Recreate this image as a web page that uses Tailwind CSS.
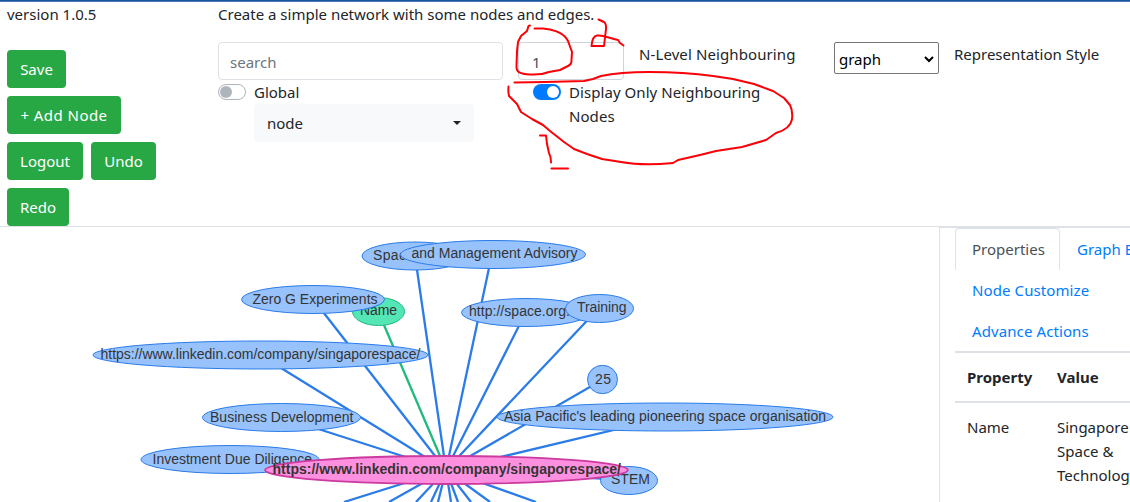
<!DOCTYPE html>
<html lang="en">
<head>
<meta charset="utf-8">
<title>Network editor</title>
<script src="https://cdn.jsdelivr.net/npm/@tailwindcss/browser@4"></script>
</head>
<body class="relative h-[502px] w-[1130px] overflow-hidden bg-white font-['Noto_Sans',sans-serif] text-[15px] leading-6 text-[#212529]">
<div class="h-0.5 border-b border-[#4a7ab5] bg-[#1b55a0]"></div>
<header class="flex h-[225px] border-b border-[#dee2e6]">
  <div class="w-[218px] pl-[7px]">
    <p class="h-12">version 1.0.5</p>
    <div class="flex w-[170px] flex-wrap gap-2 text-white">
      <button class="h-[38px] w-[59px] rounded bg-[#28a745]">Save</button>
      <button class="h-[38px] w-[114px] rounded bg-[#28a745] tracking-[0.45px]">+ Add Node</button>
      <button class="h-[38px] w-[76px] rounded bg-[#28a745]">Logout</button>
      <button class="h-[38px] w-[65px] rounded bg-[#28a745]">Undo</button>
      <button class="h-[38px] w-[62px] rounded bg-[#28a745]">Redo</button>
    </div>
  </div>
  <div class="flex-1">
    <p class="h-10">Create a simple network with some nodes and edges.</p>
    <div class="flex">
      <div class="w-[300px]">
        <div class="flex h-[38px] w-[285px] items-center rounded border border-[#dee2e6] pt-0.5 pl-[11px] text-[#6c757d]">search</div>
        <div class="flex h-6 items-center gap-2"><span class="flex h-4 w-7 items-center rounded-full border border-[#adb5bd] pl-px"><i class="size-3 rounded-full bg-[#adb5bd]"></i></span><span>Global</span></div>
        <div class="ml-9 flex h-[38px] w-[220px] items-center justify-between rounded bg-[#f8f9fa] px-[13px]"><span>node</span><i class="border-x-4 border-t-4 border-x-transparent border-t-[#212529]"></i></div>
      </div>
      <div class="w-[316px]">
        <div class="flex"><div class="flex h-[38px] w-[106px] items-center rounded border border-[#ced4da] pt-0.5 pl-[13px] text-[#495057]">1</div><span class="ml-[15px] tracking-[0.1px]">N-Level Neighbouring</span></div>
        <div class="flex gap-2 pl-[15px]"><span class="mt-1 flex h-4 w-7 items-center justify-end rounded-full bg-[#007bff] pr-0.5"><i class="size-3 rounded-full bg-white"></i></span><span class="tracking-[0.06px]">Display Only Neighbouring<br>Nodes</span></div>
      </div>
      <div class="flex items-start">
        <div class="flex h-8 w-[105px] items-center justify-between rounded-xs border border-[#767676] pt-0.5 pr-1 pl-1 text-black"><span>graph</span><svg width="10" height="7" viewBox="0 0 10 7" fill="none" stroke="black" stroke-width="2"><path d="M1 1l4 4 4-4"/></svg></div>
        <span class="ml-[15px]">Representation Style</span>
      </div>
    </div>
  </div>
</header>
<main class="flex h-[275px]">
  <svg class="shrink-0" width="939" height="275" viewBox="0 227 939 275" font-family="Liberation Sans, Arial, sans-serif" font-size="14" fill="#343434">
    <g stroke="#2b7ce9" stroke-width="2.300" fill="none">
      <path d="M446 470L415 256M446 470L492 254M446 470L526 312M446 470L599 308M446 470L602 380M446 470L668 417M446 470L628 480M446 470L313 299M446 470L260 355M446 470L281 417M446 470L230 459"/>
      <path d="M446 470L344 502M446 470L389 502M446 470L416 502M446 470L431 502M446 470L438 502M446 470L451 502M446 470L458 502M446 470L471 502M446 470L490 502M446 470L536 502"/>
      <path d="M446 470L378 311" stroke="#20b97e"/>
    </g>
    <g stroke="#2b7ce9">
      <ellipse cx="378.500" cy="311.500" rx="26" ry="14" fill="#54e6b4" stroke="#20b97e"/>
      <text x="360" y="315" textLength="37" stroke="none">Name</text>
    </g>
    <g fill="#97c2fc" stroke="#2b7ce9">
      <ellipse cx="415" cy="256" rx="53" ry="14"/>
      <text x="373" y="260" textLength="41" fill="#343434" stroke="none">Space</text>
      <ellipse cx="493" cy="254.500" rx="92.500" ry="14"/>
      <text x="411.500" y="258" textLength="166" fill="#343434" stroke="none">and Management Advisory</text>
      <ellipse cx="313" cy="299.500" rx="71.500" ry="14"/>
      <text x="252.500" y="304" textLength="125" fill="#343434" stroke="none">Zero G Experiments</text>
      <ellipse cx="260.500" cy="355" rx="167.500" ry="14"/>
      <text x="100.500" y="359" textLength="320" fill="#343434" stroke="none">https://www.linkedin.com/company/singaporespace/</text>
      <ellipse cx="526" cy="312.500" rx="64.500" ry="14"/>
      <text x="469" y="316" textLength="101" fill="#343434" stroke="none">http://space.org.</text>
      <ellipse cx="599.500" cy="308.500" rx="34" ry="14"/>
      <text x="577" y="312" textLength="49.500" fill="#343434" stroke="none">Training</text>
      <ellipse cx="602.500" cy="379.500" rx="15" ry="14.200"/>
      <text x="595" y="384" textLength="16" fill="#343434" stroke="none">25</text>
      <ellipse cx="665" cy="417" rx="168" ry="14"/>
      <text x="504" y="421" textLength="322" fill="#343434" stroke="none">Asia Pacific's leading pioneering space organisation</text>
      <ellipse cx="281.500" cy="417.500" rx="79" ry="14"/>
      <text x="210" y="422" textLength="143.500" fill="#343434" stroke="none">Business Development</text>
      <ellipse cx="230" cy="459.500" rx="89" ry="14"/>
      <text x="152.500" y="464" textLength="159.500" fill="#343434" stroke="none">Investment Due Diligence</text>
      <ellipse cx="629" cy="480.500" rx="28.500" ry="14"/>
      <text x="611" y="484" textLength="39" fill="#343434" stroke="none">STEM</text>
      <ellipse cx="446.500" cy="470" rx="181.500" ry="14" fill="#ff90df" stroke="#cb3a9f" stroke-width="1.800"/>
      <text x="272.500" y="474" textLength="348.500" font-weight="bold" fill="#343434" stroke="none">https://www.linkedin.com/company/singaporespace/</text>
    </g>
  </svg>
  <aside class="w-[191px] shrink-0 overflow-hidden border-l border-t border-[#dee2e6] pl-[15px]">
    <nav class="flex w-[300px] flex-wrap text-[#007bff]">
      <a class="h-[42px] w-[105px] rounded-t border border-b-0 border-[#dee2e6] pt-2 pl-4 text-[#495057]">Properties</a>
      <a class="h-[42px] w-[150px] pt-[9px] pl-[17px]">Graph Editor</a>
      <a class="h-[41px] w-full pt-2 pl-[17px] tracking-[0.1px]">Node Customize</a>
      <a class="h-[40px] w-full pt-2 pl-[17px] tracking-[0.1px]">Advance Actions</a>
    </nav>
    <table class="w-[300px] table-fixed border-t-2 border-[#dee2e6] text-left">
      <tr class="h-[50px] border-b-2 border-[#dee2e6]"><th class="w-[90px] pb-px pl-3">Property</th><th class="pb-px pl-3">Value</th></tr>
      <tr class="align-top"><td class="pt-3 pl-3">Name</td><td class="pt-3 pl-3">Singapore<br>Space &amp;<br>Technology</td></tr>
    </table>
  </aside>
</main>
<svg class="pointer-events-none absolute inset-0" width="1130" height="502" fill="none" stroke="#fb0007" stroke-width="2" stroke-linecap="round" stroke-linejoin="round">
  <path d="M530 25.500L528.500 26L527 31L521 36L518 42L517 51L516.500 66C516 72 520 74 530 74.500C538 75 544 74 549 72L560 70L568 66Q572 64 571.500 60L572 52L568 41C564 33 556 31 550 29.500L543 28.500H534.500"/>
  <path d="M598.500 19.500L604 22Q606.500 24 606 29L604 46H591.500C592 40 593 36 597 35.500Q602 35 607 37L614 39L618 40L620 43L623.500 45.500"/>
  <path d="M514.500 82.500L545 82L584 81L593 79L601 76Q620 72 649 72Q684 72 713 76L733 79L754 84L773 91L784 98L790 105Q793 111 792 119C791 126 786 130 776 133L766 140L742 147L716 151L700 155L678 160L673 163Q643 166 621 162L602 159L587 154L574 149L564 142L550 131L543 125L532 119L521 112L517 104L509 96Q508 92 508.500 86.500"/>
  <path d="M540 135.500H546L547 144L549 153L550.500 157L551 162.500M551.500 168.500H568"/>
</svg>
</body>
</html>
